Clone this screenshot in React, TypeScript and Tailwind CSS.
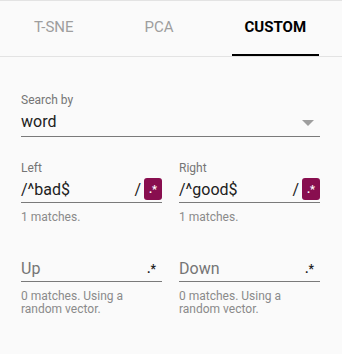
import React from 'react';

type Field = {
  label?: string;
  value?: string;
  placeholder?: string;
  regex: boolean;
  help: string[];
};

const tabs = [
  { name: 'T-SNE', active: false },
  { name: 'PCA', active: false },
  { name: 'CUSTOM', active: true },
];

function RegexInput({ field }: { field: Field }) {
  return (
    <div className="flex flex-col">
      {field.label && (
        <div className="text-[12px] leading-[16px] text-[#757575]">{field.label}</div>
      )}
      <div
        className={`flex items-end h-[26px] border-b border-[#7a7a7a] ${field.label ? 'mt-[1px]' : ''}`}
      >
        {field.value ? (
          <span className="text-[16px] leading-[24px] text-[#212121] h-[24px] flex-1">
            /{field.value}
          </span>
        ) : (
          <span className="text-[16px] leading-[24px] text-[#757575] h-[24px] flex-1">
            {field.placeholder}
          </span>
        )}
        {field.regex ? (
          <div className="flex items-end gap-[3px]">
            <span className="text-[16px] leading-[24px] text-[#212121] h-[24px]">/</span>
            <span className="mb-[2px] flex items-center justify-center w-[18px] h-[22px] rounded-[3px] bg-[#880e4f] text-white text-[11px] leading-none font-bold">
              .*
            </span>
          </div>
        ) : (
          <span className="mb-[6px] mr-[6px] text-[12px] leading-none font-bold text-[#212121]">
            .*
          </span>
        )}
      </div>
      <div className="mt-[8px] text-[12px] leading-[13.5px] text-[#8a8a8a]">
        {field.help.map((h) => (
          <div key={h}>{h}</div>
        ))}
      </div>
    </div>
  );
}

export default function App() {
  return (
    <div
      className="w-[342px] h-[354px] bg-[#fafafa] overflow-hidden"
      style={{ fontFamily: 'Roboto, "Liberation Sans", sans-serif' }}
    >
      {/* Tabs */}
      <div className="h-[57px] border-t border-b border-[#e3e3e3] flex pl-[21px] gap-[45px]">
        {tabs.map((t) => (
          <div
            key={t.name}
            className={`px-[13px] flex items-center pb-[1px] text-[15px] ${
              t.active
                ? 'border-b-2 border-black text-black font-bold'
                : 'border-b-2 border-transparent text-[#9e9e9e]'
            }`}
          >
            {t.name}
          </div>
        ))}
      </div>

      <div className="pl-[21px] pr-[22px]">
        {/* Search by */}
        <div className="mt-[35px]">
          <div className="text-[12px] leading-[16px] text-[#757575]">Search by</div>
          <div className="mt-[2px] h-[27px] flex items-start justify-between border-b border-[#7a7a7a]">
            <span className="text-[16px] leading-[24px] text-[#212121]">word</span>
            <svg width="12" height="6" viewBox="0 0 12 6" className="mt-[10px] mr-[6px]">
              <path d="M0 0 L12 0 L6 6 Z" fill="#9e9e9e" />
            </svg>
          </div>
        </div>

        {/* Left / Right */}
        <div className="mt-[23px] grid grid-cols-2 gap-x-[17px]">
          <RegexInput field={{ label: 'Left', value: '^bad$', regex: true, help: ['1 matches.'] }} />
          <RegexInput field={{ label: 'Right', value: '^good$', regex: true, help: ['1 matches.'] }} />
        </div>

        {/* Up / Down */}
        <div className="mt-[31px] grid grid-cols-2 gap-x-[17px]">
          <RegexInput
            field={{ placeholder: 'Up', regex: false, help: ['0 matches. Using a', 'random vector.'] }}
          />
          <RegexInput
            field={{ placeholder: 'Down', regex: false, help: ['0 matches. Using a', 'random vector.'] }}
          />
        </div>
      </div>
    </div>
  );
}
